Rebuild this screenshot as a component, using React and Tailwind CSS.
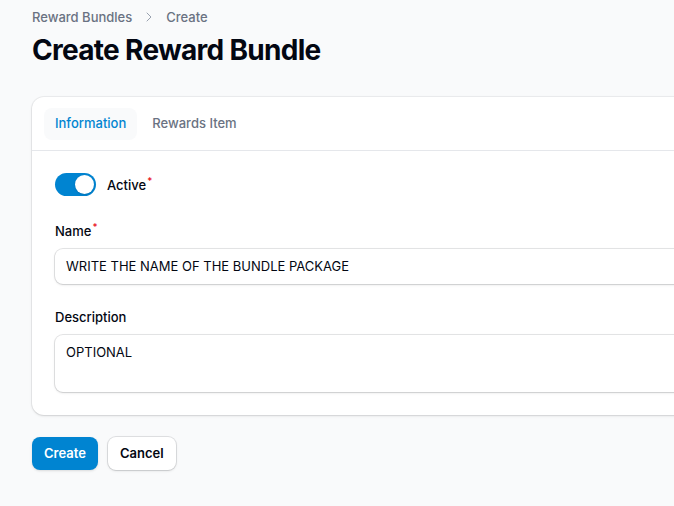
import { ChevronRight } from "lucide-react";

const Label = ({ children, required }) => (
  <label className="block text-[13px] font-medium leading-5 text-gray-950">
    {children}
    {required ? <sup className="ml-px font-medium text-red-600">*</sup> : null}
  </label>
);

export default function App() {
  return (
    <div
      className="h-[506px] w-full overflow-hidden bg-gray-50"
      style={{ fontFamily: "Inter, 'Noto Sans', sans-serif" }}
    >
      <div className="w-[760px] px-8 pt-2">
        <nav className="flex items-center gap-x-[9px] text-[13px] font-medium leading-[18px] text-gray-500">
          <span>Reward Bundles</span>
          <ChevronRight className="h-4 w-4 text-gray-400" strokeWidth={1.5} />
          <span>Create</span>
        </nav>
        <h1 className="mt-1.5 text-[28px] font-bold leading-9 tracking-tight text-gray-950">
          Create Reward Bundle
        </h1>

        <div className="mt-[29px] rounded-xl bg-white shadow-sm ring-1 ring-gray-950/5">
          <div className="flex gap-x-1 border-b border-gray-200 px-3 pb-[10px] pt-[11px]">
            <button className="h-8 rounded-lg bg-gray-50 px-[11px] text-[13px] font-medium text-sky-600">
              Information
            </button>
            <button className="h-8 rounded-lg px-[11px] text-[13px] font-medium text-gray-500">
              Rewards Item
            </button>
          </div>

          <div className="px-[23px] pb-[23px] pt-[22px]">
            <div className="flex items-center gap-[11px]">
              <span className="inline-flex h-[23px] w-[41px] items-center rounded-full bg-sky-600">
                <span className="ml-[20px] h-[19px] w-[19px] rounded-full bg-white shadow" />
              </span>
              <Label required>Active</Label>
            </div>

            <div className="mt-[25px]">
              <Label required>Name</Label>
              <div className="mt-2 rounded-lg bg-white px-[11px] py-2 text-[13px] leading-[19px] text-gray-950 shadow-sm ring-1 ring-gray-950/10">
                WRITE THE NAME OF THE BUNDLE PACKAGE
              </div>
            </div>

            <div className="mt-[23px]">
              <Label>Description</Label>
              <div className="mt-2 h-[57px] rounded-lg bg-white px-[11px] py-2 text-[13px] leading-[19px] text-gray-950 shadow-sm ring-1 ring-gray-950/10">
                OPTIONAL
              </div>
            </div>
          </div>
        </div>

        <div className="mt-[22px] flex gap-[10px]">
          <button className="h-[33px] rounded-lg bg-sky-600 px-3 text-[13px] font-semibold text-white shadow-sm">
            Create
          </button>
          <button className="h-[33px] rounded-lg bg-white px-3 text-[13px] font-semibold text-gray-950 shadow-sm ring-1 ring-gray-950/10">
            Cancel
          </button>
        </div>
      </div>
    </div>
  );
}
